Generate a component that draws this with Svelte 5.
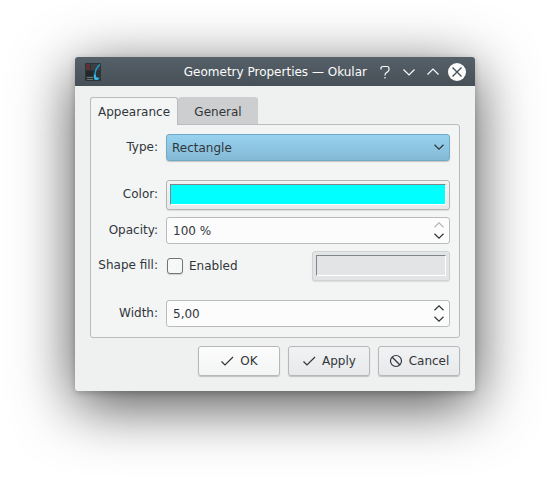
<script>
  let tab = $state('appearance');
  let type = $state('Rectangle');
  let opacity = $state(100);
  let width = $state(5);
  let fill = $state(false);

  const widthText = $derived(width.toFixed(2).replace('.', ','));
</script>

{#snippet up()}
  <svg width="10" height="6" viewBox="0 0 10 6" aria-hidden="true"><path d="M.5 5.200 5 .8l4.500 4.400" /></svg>
{/snippet}

{#snippet down()}
  <svg width="10" height="6" viewBox="0 0 10 6" aria-hidden="true"><path d="M.5 .8 5 5.200l4.500-4.400" /></svg>
{/snippet}

{#snippet check()}
  <svg width="14" height="14" viewBox="0 0 14 14" aria-hidden="true"><path d="M1.500 7.500 5 11l8-8" /></svg>
{/snippet}

<main class="desktop">
  <section class="dialog" role="dialog" aria-labelledby="title">
    <header class="titlebar">
      <svg class="app" width="16" height="18" viewBox="0 0 16 18" aria-hidden="true">
        <rect width="16" height="18" rx="1" fill="#2e3338" />
        <rect x="1" y="1" width="4" height="6" fill="#5c3039" />
        <rect x="6" y="1" width="9" height="6" fill="#3b4045" />
        <rect x="1" y="8" width="7" height="5" fill="#24272a" />
        <path d="M2 14.500h6M2 16.500h6" stroke="#6c7174" />
        <path d="M15 1.500C11.500 4 10 8 9.800 13" fill="none" stroke="#1d9fd0" stroke-width="1.400" />
        <path d="M9 11.500h1.800c-.2 2.500.7 3.500 3.700 3.200-.5 1.700-1.700 2.300-3.200 2.300-2.300 0-2.800-2-2.300-5.500z" fill="#32b9e8" />
      </svg>
      <h1 id="title">Geometry Properties — Okular</h1>
      <div class="controls">
        <button type="button" aria-label="Help">
          <svg width="18" height="18" viewBox="0 0 18 18"><path d="M5 6.500V5.500Q5 3.500 7 3.500h4q2 0 2 2v1q0 1.200-1 2L10 10q-1 .8-1 2.500M9 14v1.500" /></svg>
        </button>
        <button type="button" aria-label="Minimize">
          <svg width="18" height="18" viewBox="0 0 18 18"><path d="M3.500 6.500 9 12l5.500-5.500" /></svg>
        </button>
        <button type="button" aria-label="Maximize">
          <svg width="18" height="18" viewBox="0 0 18 18"><path d="M3.500 11.500 9 6l5.500 5.500" /></svg>
        </button>
        <button type="button" aria-label="Close">
          <svg width="18" height="18" viewBox="0 0 18 18"><circle cx="9" cy="9" r="9" fill="#fcfcfc" stroke="none" /><path class="cross" d="m4.500 4.500 9 9m0-9-9 9" /></svg>
        </button>
      </div>
    </header>

    <div class="content">
      <div class="tabs" role="tablist">
        <button type="button" role="tab" class="first" aria-selected={tab === 'appearance'} onclick={() => (tab = 'appearance')}>Appearance</button>
        <button type="button" role="tab" class="second" aria-selected={tab === 'general'} onclick={() => (tab = 'general')}>General</button>
      </div>

      <div class="panel" role="tabpanel">
        {#if tab === 'appearance'}
          <div class="group">
            <div class="row">
              <label class="name" for="type">Type:</label>
              <div class="field">
                <select id="type" bind:value={type}>
                  <option>Rectangle</option>
                  <option>Ellipse</option>
                </select>
                <span class="arrow">{@render down()}</span>
              </div>
            </div>
          </div>

          <div class="group">
            <div class="row">
              <label class="name" for="color">Color:</label>
              <button type="button" id="color" class="swatch" aria-label="Cyan"><span></span></button>
            </div>
            <div class="row">
              <label class="name" for="opacity">Opacity:</label>
              <div class="field">
                <input id="opacity" type="text" value="{opacity} %" />
                <div class="spin">
                  <button type="button" aria-label="More opacity" disabled={opacity >= 100} onclick={() => opacity++}>{@render up()}</button>
                  <button type="button" aria-label="Less opacity" disabled={opacity <= 0} onclick={() => opacity--}>{@render down()}</button>
                </div>
              </div>
            </div>
            <div class="row">
              <span class="name" id="fill-name">Shape fill:</span>
              <div class="fill" role="group" aria-labelledby="fill-name">
                <label class="check"><input type="checkbox" bind:checked={fill} />Enabled</label>
                <button type="button" class="swatch" aria-label="Fill color" disabled={!fill}><span></span></button>
              </div>
            </div>
          </div>

          <div class="group">
            <div class="row">
              <label class="name" for="width">Width:</label>
              <div class="field">
                <input id="width" type="text" value={widthText} />
                <div class="spin">
                  <button type="button" aria-label="Wider" onclick={() => width++}>{@render up()}</button>
                  <button type="button" aria-label="Narrower" disabled={width <= 1} onclick={() => width--}>{@render down()}</button>
                </div>
              </div>
            </div>
          </div>
        {/if}
      </div>

      <footer>
        <button type="button" class="push default">{@render check()}OK</button>
        <button type="button" class="push">{@render check()}Apply</button>
        <button type="button" class="push">
          <svg width="14" height="14" viewBox="0 0 14 14" aria-hidden="true"><circle cx="7" cy="7" r="5.500" /><path d="m3 3 8 8" /></svg>Cancel
        </button>
      </footer>
    </div>
  </section>
</main>

<style>
  :global(body) {
    margin: 0;
    background: #fff;
  }
  .desktop,
  .desktop * {
    box-sizing: border-box;
  }
  .desktop {
    min-height: 100vh;
    padding: 57px 75px;
    overflow: hidden;
    font: 12px/16px 'DejaVu Sans', Verdana, sans-serif;
    color: #31363b;
  }
  button,
  input,
  select {
    font: inherit;
    color: inherit;
    margin: 0;
    padding: 0;
  }
  button {
    border: 0;
    background: none;
  }
  svg {
    display: block;
    flex: none;
    fill: none;
    stroke: currentColor;
    stroke-width: 1.200;
  }
  .dialog {
    border-radius: 3px;
    background: #eff1f1;
    box-shadow:
      0 2px 6px rgba(0, 0, 0, 0.2),
      0 14px 60px rgba(0, 0, 0, 0.7);
  }
  .titlebar {
    display: flex;
    align-items: center;
    height: 29px;
    padding: 0 9px 0 10px;
    border-radius: 3px 3px 0 0;
    background: linear-gradient(#566069, #475057);
    color: #fcfcfc;
  }
  .app {
    stroke: none;
  }
  h1 {
    flex: 1;
    margin: 0;
    text-align: right;
    font: inherit;
  }
  .controls {
    display: flex;
    gap: 6px;
    margin-left: 9px;
  }
  .cross {
    stroke: #475057;
    stroke-width: 1.400;
  }
  .content {
    padding: 11px 15px 15px;
  }
  .tabs {
    display: flex;
  }
  .tabs button {
    height: 27px;
    border: 1px solid #cdced0;
    border-bottom: 0;
    background: #cdced0;
    border-radius: 3px 3px 0 0;
    padding-top: 1px;
  }
  .tabs .first {
    width: 88px;
  }
  .tabs .second {
    width: 80px;
  }
  .tabs button[aria-selected='true'] {
    position: relative;
    height: 28px;
    margin-bottom: -1px;
    border-color: #b9bcbd;
    background: #f3f5f5;
  }
  .panel {
    display: flex;
    flex-direction: column;
    gap: 19px;
    padding: 9px 9px 10px 8px;
    border: 1px solid #b9bcbd;
    border-radius: 0 3px 3px 3px;
    background: #f3f5f5;
  }
  .group {
    display: flex;
    flex-direction: column;
    gap: 7px;
  }
  .row {
    display: flex;
    align-items: center;
    gap: 8px;
  }
  .name {
    display: flex;
    flex: none;
    justify-content: flex-end;
    width: 59px;
    padding-bottom: 2px;
    white-space: nowrap;
  }
  .field {
    position: relative;
    flex: 1;
    display: flex;
  }
  select,
  .field input {
    appearance: none;
    width: 100%;
    height: 27px;
    border: 1px solid #b9bcbd;
    border-radius: 3px;
    padding: 0 24px 0 6px;
    background: #fcfcfc;
  }
  select {
    padding-left: 5px;
    border-color: #72aac6;
    background: linear-gradient(#97d2ef, #84b9d5);
    box-shadow: 0 1px 1px rgba(0, 0, 0, 0.2);
  }
  .arrow {
    position: absolute;
    right: 6px;
    top: 10px;
    pointer-events: none;
  }
  .spin {
    position: absolute;
    right: 6px;
    top: 5px;
    bottom: 5px;
    display: flex;
    flex-direction: column;
    justify-content: space-between;
  }
  .spin button:disabled {
    color: #b4b6b7;
  }
  .swatch {
    flex: 1;
    display: flex;
    height: 30px;
    padding: 3px 3px 4px;
    border: 1px solid #b2b4b6;
    border-radius: 3px;
    background: linear-gradient(#f2f3f3, #e8e9ea);
    box-shadow: 0 1px 1px rgba(0, 0, 0, 0.1);
  }
  .swatch span {
    flex: 1;
    border: 1px solid;
    border-color: #7e868c #fff #fff #7e868c;
    background: #0ff;
  }
  .swatch:disabled {
    flex: none;
    width: 138px;
    border-color: #d0d2d3;
    background: #e3e4e6;
  }
  .swatch:disabled span {
    background: #e3e4e6;
  }
  .fill {
    flex: 1;
    display: flex;
    justify-content: space-between;
    align-items: center;
  }
  .check {
    display: flex;
    align-items: center;
    gap: 6px;
    padding-left: 1px;
  }
  .check input {
    appearance: none;
    width: 16px;
    height: 16px;
    border: 1px solid #70757a;
    border-radius: 3px;
    background: #f6f7f7;
    box-shadow: 0 1px 1px rgba(0, 0, 0, 0.15);
  }
  .check input:checked {
    background: #3daee9;
  }
  footer {
    display: flex;
    justify-content: flex-end;
    gap: 8px;
    margin-top: 8px;
  }
  .push {
    display: flex;
    align-items: center;
    justify-content: center;
    gap: 6px;
    width: 82px;
    height: 30px;
    border: 1px solid #b5b7b9;
    border-radius: 3px;
    background: linear-gradient(#f1f2f3, #e8e9ea);
    box-shadow: 0 1px 1px rgba(0, 0, 0, 0.2);
  }
  .push.default {
    background: linear-gradient(#fcfcfc, #f3f4f4);
  }
</style>
